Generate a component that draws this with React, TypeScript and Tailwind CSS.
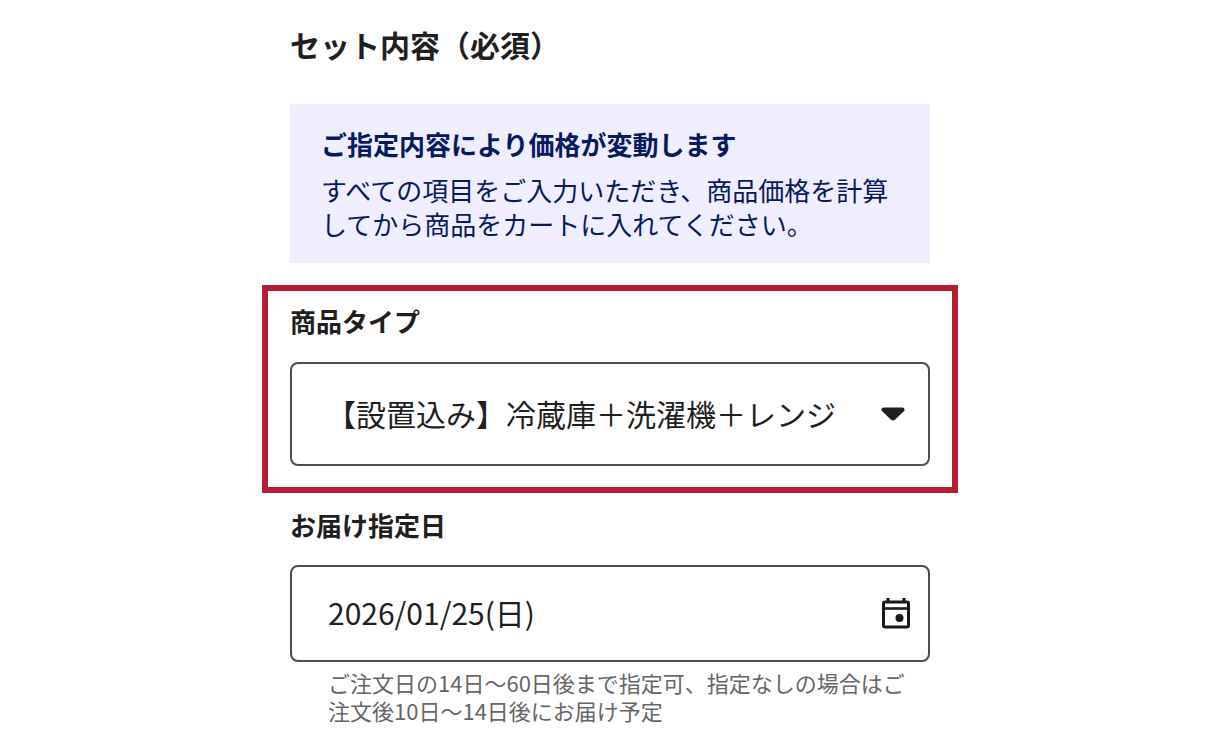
import { useState } from 'react'

const productTypes = [
  { value: 'install_three', label: '【設置込み】冷蔵庫＋洗濯機＋レンジ' },
]

function CaretIcon() {
  return (
    <svg width="24" height="14" viewBox="0 0 24 14" aria-hidden="true">
      <path
        d="M3 0.4H21Q23.6 0.4 23.6 2.4Q23.6 3.6 22.6 4.5L14.2 12.4Q12 14.4 9.8 12.4L1.4 4.5Q0.4 3.6 0.4 2.4Q0.4 0.4 3 0.4Z"
        fill="#1f1f1f"
      />
    </svg>
  )
}

function CalendarIcon() {
  return (
    <svg width="30" height="32" viewBox="0 0 30 32" fill="none" stroke="#1a1a1a" aria-hidden="true">
      <rect x="2.5" y="5" width="25" height="25" rx="1.5" strokeWidth="3" />
      <path d="M2 11.5H28" strokeWidth="2.6" />
      <path d="M7 1V5M23 1V5" strokeWidth="3" />
      <circle cx="18.5" cy="21" r="4" fill="#1a1a1a" stroke="none" />
    </svg>
  )
}

export default function App() {
  const [productType, setProductType] = useState('install_three')
  const [deliveryDate, setDeliveryDate] = useState('2026/01/25(日)')

  return (
    <main className="min-h-screen bg-white px-8 pt-[22px] pb-5 font-['Noto_Sans_CJK_JP','Noto_Sans',sans-serif] text-[#1f1f1f]">
      <form className="mx-auto max-w-[640px]">
        <h1 className="text-[30px] leading-[44px] font-bold">セット内容（必須）</h1>

        <div className="mt-[38px] bg-[#f0edff] px-[31px] pt-[23px] pb-[22px] text-[26px] leading-[34px] text-[#061a5e]">
          <p className="font-bold">ご指定内容により価格が変動します</p>
          <p className="mt-3">
            すべての項目をご入力いただき、商品価格を計算してから商品をカートに入れてください。
          </p>
        </div>

        <div className="-mx-7 mt-[22px] border-6 border-[#b71c35] px-[22px] pt-[11px] pb-[21px]">
          <label htmlFor="product-type" className="block text-[26px] leading-[38px] font-bold">
            商品タイプ
          </label>
          <div className="mt-[22px] grid items-center">
            <select
              id="product-type"
              value={productType}
              onChange={(e) => setProductType(e.target.value)}
              className="col-start-1 row-start-1 h-[104px] w-full appearance-none rounded-lg border-2 border-[#4d4d4d] bg-white pr-16 pb-[2px] pl-[34px] text-[30px]"
            >
              {productTypes.map(({ value, label }) => (
                <option key={value} value={value}>
                  {label}
                </option>
              ))}
            </select>
            <span className="pointer-events-none col-start-1 row-start-1 mr-[25px] justify-self-end">
              <CaretIcon />
            </span>
          </div>
        </div>

        <div className="mt-[13px]">
          <label htmlFor="delivery-date" className="block text-[26px] leading-[38px] font-bold">
            お届け指定日
          </label>
          <div className="mt-[21px] flex h-[97px] items-center rounded-lg border-2 border-[#4d4d4d] bg-white pr-[17px] pb-[2px] pl-9">
            <input
              id="delivery-date"
              type="text"
              value={deliveryDate}
              onChange={(e) => setDeliveryDate(e.target.value)}
              aria-describedby="delivery-date-hint"
              className="min-w-0 flex-1 bg-transparent text-[30px] outline-none"
            />
            <button type="button" aria-label="カレンダーを開く">
              <CalendarIcon />
            </button>
          </div>
          <p id="delivery-date-hint" className="mt-[6px] pr-3 pl-[38px] text-[22px] leading-[28px] text-[#666666]">
            ご注文日の14日～60日後まで指定可、指定なしの場合はご注文後10日～14日後にお届け予定
          </p>
        </div>
      </form>
    </main>
  )
}
